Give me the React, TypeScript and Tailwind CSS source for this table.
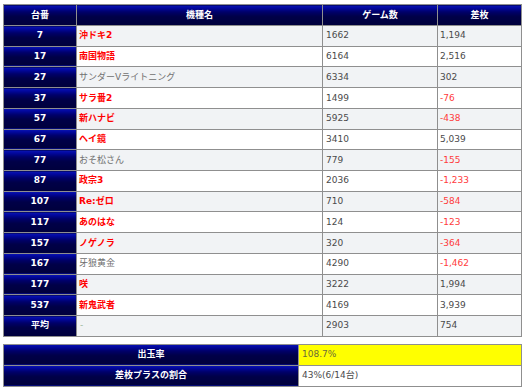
import React from "react";

type Row = { no: string; name: string; hot: boolean; games: string; diff: string };

const rows: Row[] = [
  { no: "7", name: "沖ドキ2", hot: true, games: "1662", diff: "1,194" },
  { no: "17", name: "南国物語", hot: true, games: "6164", diff: "2,516" },
  { no: "27", name: "サンダーVライトニング", hot: false, games: "6334", diff: "302" },
  { no: "37", name: "サラ番2", hot: true, games: "1499", diff: "-76" },
  { no: "57", name: "新ハナビ", hot: true, games: "5925", diff: "-438" },
  { no: "67", name: "ヘイ鏡", hot: true, games: "3410", diff: "5,039" },
  { no: "77", name: "おそ松さん", hot: false, games: "779", diff: "-155" },
  { no: "87", name: "政宗3", hot: true, games: "2036", diff: "-1,233" },
  { no: "107", name: "Re:ゼロ", hot: true, games: "710", diff: "-584" },
  { no: "117", name: "あのはな", hot: true, games: "124", diff: "-123" },
  { no: "157", name: "ノゲノラ", hot: true, games: "320", diff: "-364" },
  { no: "167", name: "牙狼黄金", hot: false, games: "4290", diff: "-1,462" },
  { no: "177", name: "咲", hot: true, games: "3222", diff: "1,994" },
  { no: "537", name: "新鬼武者", hot: true, games: "4169", diff: "3,939" },
];

const navy =
  "bg-[linear-gradient(to_bottom,#0a16b4_0%,#0208a0_12%,#00006a_32%,#000048_55%,#00003c_100%)] text-white font-bold text-center";

export default function App() {
  return (
    <div
      className="w-[526px] h-[390px] bg-white pl-[3px] pt-[4px] text-[9px] leading-none"
      style={{ fontFamily: '"DejaVu Sans", "Noto Sans CJK JP", sans-serif' }}
    >
      <table className="table-fixed border-collapse w-[518px] border border-[#8f8f8f]">
        <colgroup>
          <col className="w-[73px]" />
          <col className="w-[246px]" />
          <col className="w-[115px]" />
          <col className="w-[84px]" />
        </colgroup>
        <thead>
          <tr className="h-[21px]">
            <th className={`${navy} border border-[#8f8f8f]`}>台番</th>
            <th className={`${navy} border border-[#8f8f8f]`}>機種名</th>
            <th className={`${navy} border border-[#8f8f8f]`}>ゲーム数</th>
            <th className={`${navy} border border-[#8f8f8f]`}>差枚</th>
          </tr>
        </thead>
        <tbody>
          {rows.map((r, i) => {
            const bg = i % 2 === 0 ? "bg-[#f1f3f5]" : "bg-white";
            const neg = r.diff.startsWith("-");
            return (
              <tr key={r.no} className="h-[20.73px]">
                <td className={`${navy} border border-[#8f8f8f]`}>{r.no}</td>
                <td
                  className={`${bg} border border-[#8f8f8f] pl-[2px] ${
                    r.hot ? "text-[#ff0000] font-bold" : "text-[#707070]"
                  }`}
                >
                  {r.name}
                </td>
                <td className={`${bg} border border-[#8f8f8f] pl-[3px] text-[#4a4a4a]`}>{r.games}</td>
                <td
                  className={`${bg} border border-[#8f8f8f] pl-[2px] ${
                    neg ? "text-[#ff3b3b]" : "text-[#4a4a4a]"
                  }`}
                >
                  {r.diff}
                </td>
              </tr>
            );
          })}
          <tr className="h-[20.73px]">
            <td className={`${navy} border border-[#8f8f8f]`}>平均</td>
            <td className="bg-[#f1f3f5] border border-[#8f8f8f] pl-[3px] text-[#9cb89c]">-</td>
            <td className="bg-[#f1f3f5] border border-[#8f8f8f] pl-[3px] text-[#4a4a4a]">2903</td>
            <td className="bg-[#f1f3f5] border border-[#8f8f8f] pl-[2px] text-[#4a4a4a]">754</td>
          </tr>
        </tbody>
      </table>

      <table className="table-fixed border-collapse w-[518px] border border-[#8f8f8f] mt-[7px]">
        <colgroup>
          <col className="w-[295px]" />
          <col className="w-[223px]" />
        </colgroup>
        <tbody>
          <tr className="h-[21px]">
            <td className={`${navy} border border-[#8f8f8f]`}>出玉率</td>
            <td className="bg-[#ffff00] border border-[#8f8f8f] pl-[3px] text-[#6b6b3a]">108.7%</td>
          </tr>
          <tr className="h-[21px]">
            <td className={`${navy} border border-[#8f8f8f]`}>差枚プラスの割合</td>
            <td className="bg-white border border-[#8f8f8f] pl-[3px] text-[#4a4a4a]">43%(6/14台)</td>
          </tr>
        </tbody>
      </table>
    </div>
  );
}
